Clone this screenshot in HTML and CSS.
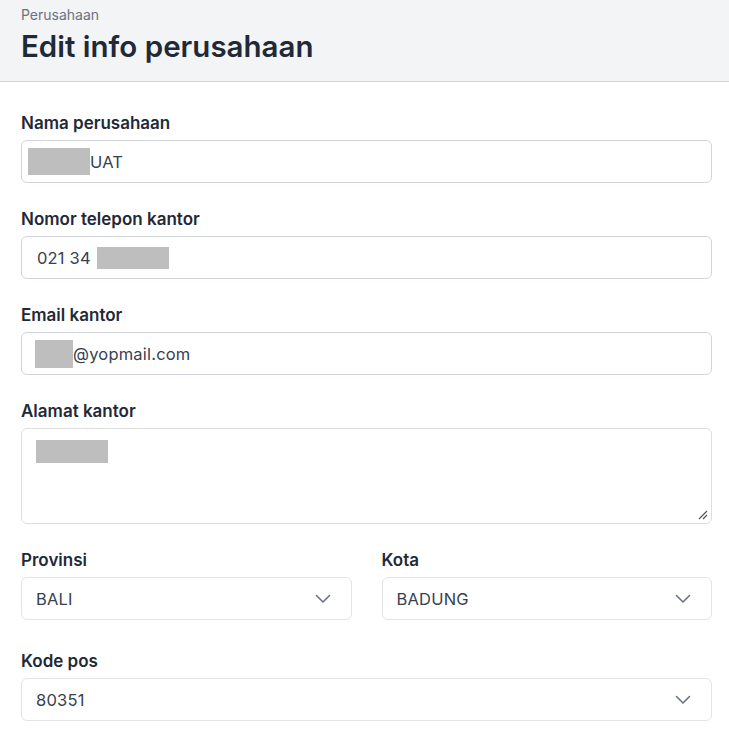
FILE: index.html
```html
<!DOCTYPE html>
<html lang="id">
<head>
<meta charset="utf-8">
<title>Edit info perusahaan</title>
<link rel="stylesheet" href="styles.css">
</head>
<body>
<header class="page-header">
  <div class="crumb">Perusahaan</div>
  <h1 class="title">Edit info perusahaan</h1>
</header>
<form class="form">
  <div class="field">
    <label class="label">Nama perusahaan</label>
    <div class="input"><span class="redact redact-name"></span>UAT</div>
  </div>
  <div class="field">
    <label class="label">Nomor telepon kantor</label>
    <div class="input"><span class="text">021 34&nbsp;</span><span class="redact redact-phone"></span></div>
  </div>
  <div class="field">
    <label class="label">Email kantor</label>
    <div class="input"><span class="redact redact-email"></span>@yopmail.com</div>
  </div>
  <div class="field">
    <label class="label">Alamat kantor</label>
    <div class="textarea">
      <span class="redact redact-address"></span>
      <svg class="resize" width="10" height="10" viewBox="0 0 10 10"><path d="M9 1 L1 9 M9 5 L5 9" stroke="#555" stroke-width="1.2" fill="none"/></svg>
    </div>
  </div>
  <div class="row">
    <div class="field">
      <label class="label">Provinsi</label>
      <div class="select"><span>BALI</span>
        <svg class="chev" width="16" height="10" viewBox="0 0 16 10"><path d="M1.5 1.5 L8 8 L14.5 1.5" stroke="#6b7280" stroke-width="1.6" fill="none" stroke-linecap="round" stroke-linejoin="round"/></svg>
      </div>
    </div>
    <div class="field">
      <label class="label">Kota</label>
      <div class="select"><span>BADUNG</span>
        <svg class="chev" width="16" height="10" viewBox="0 0 16 10"><path d="M1.5 1.5 L8 8 L14.5 1.5" stroke="#6b7280" stroke-width="1.6" fill="none" stroke-linecap="round" stroke-linejoin="round"/></svg>
      </div>
    </div>
  </div>
  <div class="field">
    <label class="label">Kode pos</label>
    <div class="select"><span>80351</span>
      <svg class="chev" width="16" height="10" viewBox="0 0 16 10"><path d="M1.5 1.5 L8 8 L14.5 1.5" stroke="#6b7280" stroke-width="1.6" fill="none" stroke-linecap="round" stroke-linejoin="round"/></svg>
    </div>
  </div>
</form>
</body>
</html>
```
FILE: styles.css
```css
* { box-sizing: border-box; }
html, body { margin: 0; padding: 0; background: #fff; }
body {
  font-family: Inter, "Noto Sans", "Liberation Sans", sans-serif;
  color: #1f2937;
}
.page-header {
  background: #f3f4f6;
  border-bottom: 1px solid #d1d5db;
  height: 82px;
  padding: 5px 21px 0;
}
.crumb {
  font-size: 14px;
  line-height: 19px;
  color: #6b7280;
}
.title {
  margin: 2px 0 0;
  font-size: 29.5px;
  line-height: 40px;
  font-weight: 600;
  color: #1f2937;
}
.form {
  display: flex;
  flex-direction: column;
  gap: 26px;
  padding: 31px 17px 0 21px;
}
.field {
  display: flex;
  flex-direction: column;
}
.label {
  font-size: 17px;
  line-height: 20px;
  font-weight: 600;
  color: #1f2937;
  margin-bottom: 7px;
}
.input, .select {
  height: 43px;
  border: 1px solid #d1d5db;
  border-radius: 6px;
  display: flex;
  align-items: center;
  padding: 0 14px;
  font-size: 16.5px;
  letter-spacing: 0.2px;
  color: #374151;
}
.input { padding-left: 6px; }
.select { border-color: #e2e4e8; justify-content: space-between; padding-right: 20px; }
.text { margin-left: 9px; white-space: pre; }
.redact { display: inline-block; background: #bebebe; }
.redact-name { width: 62px; height: 27px; }
.redact-phone { width: 72px; height: 22px; margin-left: 1px; }
.redact-email { width: 38px; height: 28px; margin-left: 7px; }
.textarea {
  height: 96px;
  border: 1px solid #dedede;
  border-radius: 6px;
  padding: 11px 14px;
  position: relative;
}
.redact-address { width: 72px; height: 23px; display: block; }
.resize { position: absolute; right: 3px; bottom: 3px; }
.row {
  display: grid;
  grid-template-columns: 1fr 1fr;
  column-gap: 30px;
  margin-bottom: 5px;
}
.chev { display: block; }
```
